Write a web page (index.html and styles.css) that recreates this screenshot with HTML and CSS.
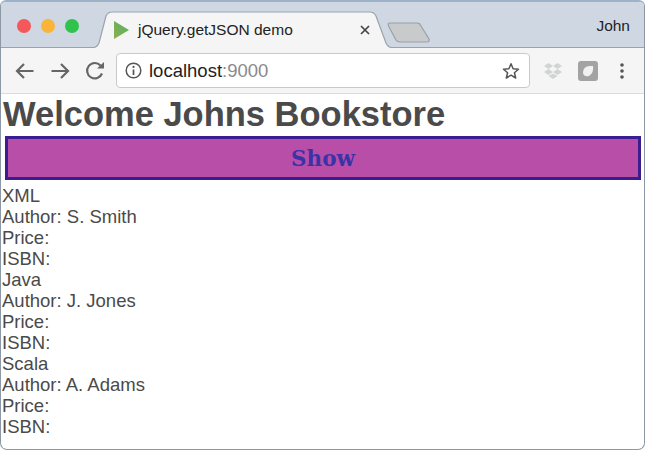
FILE: index.html
```html
<!DOCTYPE html>
<html lang="en">
<head>
<meta charset="utf-8">
<title>jQuery.getJSON demo</title>
<link rel="stylesheet" href="styles.css">
</head>
<body>
<div class="window">
  <header class="titlebar">
    <div class="lights">
      <span class="light red"></span>
      <span class="light yellow"></span>
      <span class="light green"></span>
    </div>
    <div class="tab">
      <svg class="tab-shape" width="304" height="37" viewBox="0 0 304 37">
        <path d="M0 36.5 H2 Q6 36.5 8 32 L15 5 Q17 1 21 1 H279 Q283 1 285 5 L295 32 Q297 36.5 301 36.5 H304 V38 H0 Z" fill="#f5f5f5" stroke="#9aa3ad" stroke-width="1.2"/>
      </svg>
      <svg class="favicon" width="17" height="20" viewBox="0 0 17 20">
        <defs><linearGradient id="fav" x1="0" y1="1" x2="1" y2="0"><stop offset="0" stop-color="#8fae52"/><stop offset="1" stop-color="#4fb35f"/></linearGradient></defs>
        <path d="M1 1 L16 10 L1 19 Z" fill="url(#fav)"/>
      </svg>
      <span class="tab-title">jQuery.getJSON demo</span>
      <svg class="close" width="10" height="10" viewBox="0 0 10 10"><path d="M1 1 L9 9 M9 1 L1 9" stroke="#444" stroke-width="1.7" fill="none"/></svg>
    </div>
    <svg class="newtab" width="44" height="22" viewBox="0 0 44 22"><path d="M3 1 H30 Q33 1 34 4 L42 17 Q43 20 40 20 H13 Q10 20 9 18 L2 5 Q0 1 3 1 Z" fill="#c9cacc" stroke="#9aa0a6" stroke-width="1.2"/></svg>
    <span class="user">John</span>
  </header>
  <nav class="toolbar">
    <svg class="nav" width="24" height="24" viewBox="0 0 24 24"><path d="M20.5 12 H4.5 M11 5 L4 12 L11 19" fill="none" stroke="#666" stroke-width="2.2"/></svg>
    <svg class="nav" width="24" height="24" viewBox="0 0 24 24"><path d="M3.5 12 H19.5 M13 5 L20 12 L13 19" fill="none" stroke="#666" stroke-width="2.2"/></svg>
    <svg class="nav" width="24" height="24" viewBox="0 0 24 24"><path d="M19 14.5 A7.7 7.7 0 1 1 17.5 6.5" fill="none" stroke="#666" stroke-width="2.2"/><path d="M14 9.5 H21 V3 Z" fill="#666"/></svg>
    <div class="omnibox">
      <svg width="17" height="17" viewBox="0 0 17 17"><circle cx="8.5" cy="8.5" r="7.3" fill="none" stroke="#555" stroke-width="1.5"/><path d="M8.5 7.5 V13" stroke="#555" stroke-width="1.7"/><circle cx="8.5" cy="4.9" r="1.1" fill="#555"/></svg>
      <span class="url">localhost<span class="port">:9000</span></span>
      <svg class="star" width="18" height="18" viewBox="0 0 18 18"><path d="M9 1.8 L11.1 6.8 L16.5 7.2 L12.4 10.7 L13.7 16 L9 13.2 L4.3 16 L5.6 10.7 L1.5 7.2 L6.9 6.8 Z" fill="none" stroke="#555" stroke-width="1.5" stroke-linejoin="round"/></svg>
    </div>
    <svg class="ext-drop" width="20" height="18" viewBox="0 0 20 18"><path d="M5.5 1 L10 4 L5.5 7 L1 4 Z M14.5 1 L19 4 L14.5 7 L10 4 Z M5.5 7 L10 10 L5.5 13 L1 10 Z M14.5 7 L19 10 L14.5 13 L10 10 Z M5.5 14 L10 11.5 L14.5 14 L10 17 Z" fill="#d2d4d4"/></svg>
    <svg class="ext-box" width="20" height="20" viewBox="0 0 20 20"><rect width="20" height="20" rx="3" fill="#a3a3a3"/><path d="M5 12 Q5 5 12 5 L15 5 Q16 12 11 15 Q6 16 5 12 Z" fill="#f1f1f1"/></svg>
    <svg class="menu" width="4" height="16" viewBox="0 0 4 16"><circle cx="2" cy="2" r="1.8" fill="#555"/><circle cx="2" cy="8" r="1.8" fill="#555"/><circle cx="2" cy="14" r="1.8" fill="#555"/></svg>
  </nav>
  <main class="page">
    <h1 class="heading">Welcome Johns Bookstore</h1>
    <button class="show" type="button">Show</button>
    <div class="books">
      <div>XML</div>
      <div>Author: S. Smith</div>
      <div>Price:</div>
      <div>ISBN:</div>
      <div>Java</div>
      <div>Author: J. Jones</div>
      <div>Price:</div>
      <div>ISBN:</div>
      <div>Scala</div>
      <div>Author: A. Adams</div>
      <div>Price:</div>
      <div>ISBN:</div>
    </div>
  </main>
</div>
</body>
</html>
```
FILE: styles.css
```css
* { box-sizing: border-box; }
html, body { margin: 0; padding: 0; background: #fff; }
body { width: 645px; height: 450px; overflow: hidden; font-family: "Liberation Sans", Arial, sans-serif; }
.window {
  width: 645px;
  height: 450px;
  border: 1px solid #8d98a6;
  border-top: 2px solid #9db1c8;
  border-radius: 6px 6px 7px 7px;
  overflow: hidden;
  background: #fff;
  display: flex;
  flex-direction: column;
}
.titlebar {
  height: 46px;
  flex: none;
  background: #cfd8e2;
  display: flex;
  align-items: flex-start;
  border-bottom: 1px solid #9aa3ad;
  position: relative;
}
.lights { display: flex; gap: 10px; padding: 17px 0 0 16px; width: 90px; flex: none; }
.light { width: 14px; height: 14px; border-radius: 50%; }
.red { background: #f5585a; }
.yellow { background: #f8b53a; }
.green { background: #2fc24e; }
.tab {
  position: relative;
  width: 304px;
  height: 37px;
  margin-top: 9px;
  margin-bottom: -1px;
  flex: none;
  display: flex;
  align-items: center;
  padding-left: 22px;
  font-size: 15.5px;
  color: #222;
}
.tab-shape { position: absolute; left: 0; top: 0; }
.favicon { position: relative; flex: none; margin-right: 8px; }
.tab-title { position: relative; flex: none; width: 222px; white-space: nowrap; }
.close { position: relative; flex: none; }
.newtab { flex: none; margin: 20px 0 0 -8px; }
.user { margin-left: auto; padding: 15px 14px 0 0; font-size: 15.5px; color: #222; }
.toolbar {
  height: 46px;
  flex: none;
  background: #f5f5f5;
  border-bottom: 1px solid #dcdcdc;
  display: flex;
  align-items: center;
  padding-left: 12px;
}
.nav { flex: none; margin-right: 11px; }
.omnibox {
  width: 414px;
  height: 35px;
  margin-left: -2px;
  margin-right: 1px;
  flex: none;
  background: #fff;
  border: 1.5px solid #c9c9c9;
  border-radius: 4px;
  display: flex;
  align-items: center;
  padding: 0 9px 0 8px;
  gap: 7px;
}
.url { font-size: 18.5px; color: #222; flex: 1; }
.port { color: #8a8a8a; }
.star { flex: none; }
.ext-drop { flex: none; margin-left: 12px; }
.ext-box { flex: none; margin-left: 15px; }
.menu { flex: none; margin-left: 22px; }
.page { flex: 1; padding: 0 3px 0 1px; color: #4a4a4a; }
.heading { margin: 0; font-size: 34.5px; line-height: 40px; font-weight: bold; height: 42px; padding-left: 1px; white-space: nowrap; }
.show {
  display: block;
  width: 636px;
  height: 44px;
  margin: 0 0 5px 3px;
  background: #b94ea8;
  border: 3px solid #3a1d8f;
  border-radius: 0;
  padding: 0;
  font-family: "DejaVu Serif", serif;
  font-weight: bold;
  font-size: 21.5px;
  color: #3a33a8;
}
.books { font-size: 18.5px; line-height: 21px; }
```
